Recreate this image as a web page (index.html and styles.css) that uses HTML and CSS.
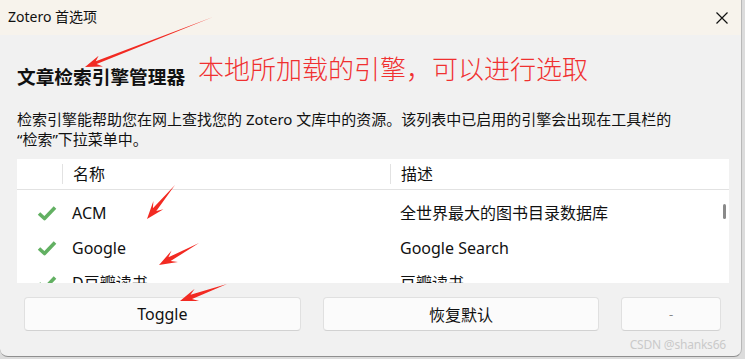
FILE: index.html
```html
<!DOCTYPE html>
<html lang="zh-CN">
    <head>
        <meta charset="UTF-8">
        <meta name="viewport" content="width=device-width, initial-scale=1.0">
        <title>Zotero 首选项</title>
        <link rel="stylesheet" href="styles.css">
    </head>
    <body>
        <div class="window">
            <div class="titlebar">
                <span class="title">Zotero 首选项</span>
                <svg class="close" width="12" height="12" viewBox="0 0 12 12">
                    <path d="M0.5 0.5 L11.5 11.5 M11.5 0.5 L0.5 11.5" stroke="#111" stroke-width="1.2" fill="none"/>
                </svg>
            </div>
            <div class="content">
                <h2 class="heading">文章检索引擎管理器</h2>
                <p class="desc">检索引擎能帮助您在网上查找您的 Zotero 文库中的资源。该列表中已启用的引擎会出现在工具栏的<br>“检索”下拉菜单中。</p>
                <div class="table">
                    <div class="row head">
                        <div class="cell"></div>
                        <div class="cell sep">名称</div>
                        <div class="cell sep">描述</div>
                    </div>
                    <div class="tbody">
                        <div class="row">
                            <div class="cell check"><svg width="20" height="16" viewBox="0 0 20 16"><path d="M2 8.5 L7.5 13.5 L18 2.5" stroke="#62b062" stroke-width="3.6" fill="none" stroke-linejoin="round"/></svg></div>
                            <div class="cell">ACM</div>
                            <div class="cell">全世界最大的图书目录数据库</div>
                        </div>
                        <div class="row">
                            <div class="cell check"><svg width="20" height="16" viewBox="0 0 20 16"><path d="M2 8.5 L7.5 13.5 L18 2.5" stroke="#62b062" stroke-width="3.6" fill="none" stroke-linejoin="round"/></svg></div>
                            <div class="cell">Google</div>
                            <div class="cell">Google Search</div>
                        </div>
                        <div class="row">
                            <div class="cell check"><svg width="20" height="16" viewBox="0 0 20 16"><path d="M2 8.5 L7.5 13.5 L18 2.5" stroke="#62b062" stroke-width="3.6" fill="none" stroke-linejoin="round"/></svg></div>
                            <div class="cell">D豆瓣读书</div>
                            <div class="cell">豆瓣读书</div>
                        </div>
                        <div class="scroll-thumb"></div>
                    </div>
                </div>
                <div class="buttons">
                    <button class="btn wide">Toggle</button>
                    <button class="btn wide">恢复默认</button>
                    <button class="btn small">-</button>
                </div>
                <div class="watermark">CSDN @shanks66</div>
            </div>

            <!-- 标注 -->
            <div class="note">本地所加载的引擎，可以进行选取</div>
            <svg class="arrows" width="742" height="357" viewBox="0 0 742 357">
                <polygon points="213,17 95.8,61.2 98.6,55.7 85,67 103,66.4 96.6,64" />
                <polygon points="175,185 152.9,208.3 153.4,201 147,219 163.4,209.2 156.3,211.1" />
                <polygon points="199,243 168.4,257.3 171.6,250.6 159,265 177.9,262 170.6,261.1" />
                <polygon points="227,284 190.5,294.8 194.7,288.8 180,301 199.1,301 192,299" />
            </svg>
        </div>
    </body>
</html>
```

FILE: styles.css
```css
body {
    margin: 0;
    background-color: #dcdcdc;
    font-family: "Noto Sans", "Noto Sans CJK SC", sans-serif;
    color: #111;
}
.window {
    position: relative;
    width: 741px;
    height: 356px;
    background-color: #f1f1f1;
    border-right: 1px solid #b8b8b8;
    border-bottom: 1px solid #8f8f8f;
    border-radius: 0 0 8px 8px;
    overflow: hidden;
    display: flex;
    flex-direction: column;
}
.titlebar {
    height: 35px;
    background-color: #f7f3ec;
    display: flex;
    align-items: center;
    justify-content: space-between;
    padding: 0 9px 0 8px;
    flex-shrink: 0;
}
.title {
    font-size: 14px;
    line-height: 20px;
    margin-top: -2px;
}
.close {
    margin-right: 4px;
}
.content {
    padding: 30px 12px 0 17px;
    display: flex;
    flex-direction: column;
}
.heading {
    margin: 0;
    font-size: 18.7px;
    line-height: 24px;
    font-weight: 700;
}
.desc {
    margin: 20px 0 0;
    font-size: 15px;
    line-height: 20px;
}
.table {
    margin-top: 10px;
    background-color: #fff;
    height: 124px;
    overflow: hidden;
}
.row {
    display: grid;
    grid-template-columns: 45px 328px 1fr;
    height: 35px;
    align-items: center;
    font-size: 16px;
}
.row.head {
    height: 30px;
    border-bottom: 1px solid #e2e2e2;
    font-size: 16px;
}
.cell {
    padding-left: 10px;
    line-height: 20px;
    white-space: nowrap;
}
.head .sep {
    border-left: 1px solid #e2e2e2;
}
.check {
    padding-left: 20px;
    display: flex;
    align-items: center;
}
.tbody {
    position: relative;
    padding-top: 5px;
}
.scroll-thumb {
    position: absolute;
    right: 3px;
    top: 14px;
    width: 3px;
    height: 15px;
    border-radius: 2px;
    background-color: #8a8a8a;
}
.buttons {
    display: flex;
    gap: 22px;
    margin: 14px 8px 0 7px;
}
.btn {
    height: 34px;
    background-color: #fbfbfb;
    border: 1px solid #e0e0e0;
    border-bottom-color: #d2d2d2;
    border-radius: 4px;
    font-family: inherit;
    font-size: 16px;
    color: #111;
    padding: 0;
}
.btn.wide {
    width: 278px;
}
.btn.small {
    width: 100px;
    color: #888;
    font-size: 13px;
}
.watermark {
    align-self: flex-end;
    margin: 7px 3px 0 0;
    font-size: 12px;
    line-height: 14px;
    letter-spacing: -0.2px;
    color: #cacaca;
}
.note {
    position: absolute;
    left: 198px;
    top: 53px;
    font-size: 26px;
    line-height: 32px;
    color: #f03030;
    font-weight: 300;
}
.arrows {
    position: absolute;
    left: 0;
    top: 0;
    pointer-events: none;
}
.arrows polygon {
    fill: #f22a22;
}
```
